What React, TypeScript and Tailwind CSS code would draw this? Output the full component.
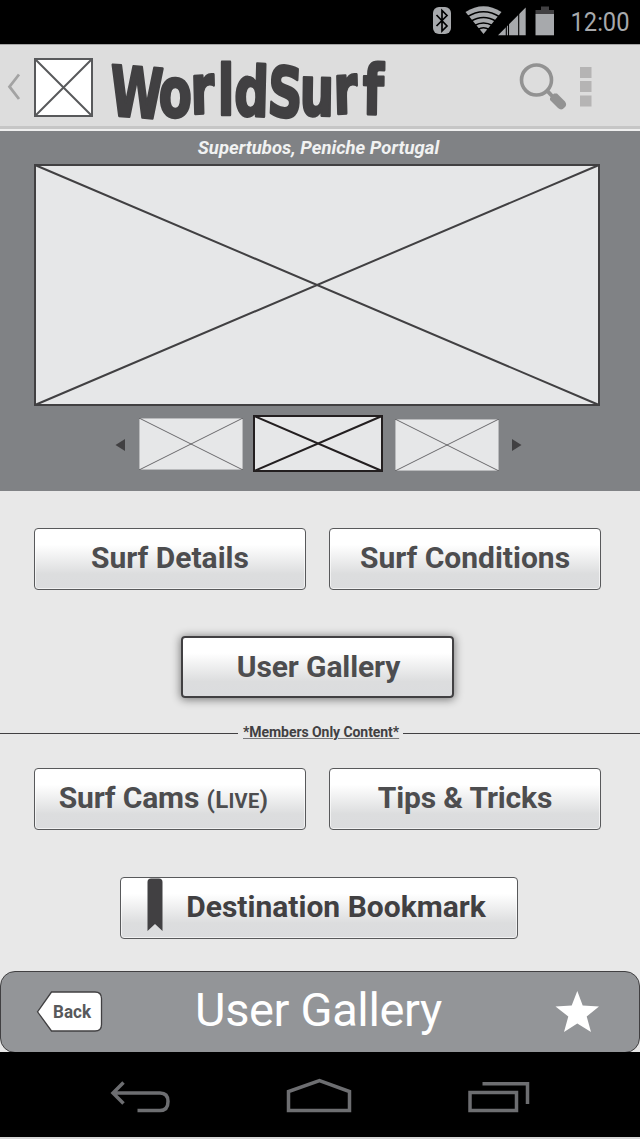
import type { ReactNode } from "react";

function CrossBox({ w, h, stroke, line, fill, className = "" }: { w: number; h: number; stroke: string; line: number; fill: string; className?: string }) {
  const i = line / 2;
  return (
    <svg width={w} height={h} viewBox={`0 0 ${w} ${h}`} className={`block shrink-0 ${className}`}>
      <rect x={i} y={i} width={w - line} height={h - line} fill={fill} stroke={stroke} strokeWidth={line} />
      <path d={`M${i} ${i}L${w - i} ${h - i}M${w - i} ${i}L${i} ${h - i}`} stroke={stroke} strokeWidth={line} />
    </svg>
  );
}

function Thumb({ className = "" }: { className?: string }) {
  return (
    <svg width="104" height="52" viewBox="0 0 104 52" className={`block shrink-0 ${className}`}>
      <rect width="104" height="52" fill="#e6e7e8" stroke="#77797c" strokeWidth="0.8" />
      <path d="M0 0L104 52M104 0L0 52" stroke="#4a4a4c" strokeWidth="0.8" />
    </svg>
  );
}

function Button({ children, glow, className = "" }: { children: ReactNode; glow?: boolean; className?: string }) {
  const frame = glow
    ? "border-2 border-[#414042] shadow-[0_1px_9px_1px_rgba(0,0,0,0.45)]"
    : "border border-[#58595b] shadow-[inset_0_0_0_1px_rgba(255,255,255,0.6)]";
  return (
    <button
      className={`flex h-[62px] shrink-0 items-center justify-center rounded-[4px] bg-[linear-gradient(180deg,#fff_0%,#fff_26%,#dcddde_75%,#dbdcde_100%)] pb-[3px] text-[30px] leading-none font-bold whitespace-nowrap text-[#4d4d4f] ${frame} ${className}`}
    >
      {children}
    </button>
  );
}

function StatusBar() {
  return (
    <div className="flex h-[44px] items-start bg-black pl-[433px]">
      <svg width="205" height="44" viewBox="433 0 205 44">
        <rect x="433" y="7" width="18" height="27" rx="6" fill="#a7a9ac" />
        <path d="M436.500 15L447 26L442 31V10.500L447 15.500L436.500 26" fill="none" stroke="#000" strokeWidth="1.700" />
        <path d="M465.500 12Q483.500 0.500 501.500 12L483.500 34Z" fill="#a7a9ac" />
        <path d="M467 17Q483.500 6.500 500 17M470.500 21.500Q483.500 13.500 496.500 21.500M474.500 25.500Q483.500 20.500 492.500 25.500M478 29.500Q483.500 26 489 29.500" fill="none" stroke="#000" strokeWidth="1.500" />
        <path d="M498 35.300L525.700 7.500V35.300Z" fill="#a7a9ac" />
        <path d="M506.300 20V36M508.500 18V36M518.700 9V36" stroke="#000" strokeWidth="1.100" />
        <path d="M541 10V6.500H549V10H554V14H535.500V10Z" fill="#414042" />
        <path d="M535.500 14H554V35.300H535.500Z" fill="#a7a9ac" />
        <text x="570.500" y="31" fontFamily="Roboto" fontSize="26" fill="#a7a9ac" textLength="59" lengthAdjust="spacingAndGlyphs">12:00</text>
      </svg>
    </div>
  );
}

function Header() {
  return (
    <header className="flex h-[87px] items-start border-t border-[#a5a5a5] bg-[linear-gradient(180deg,#ddd_0,#ddd_81px,#c6c6c6_81px,#c6c6c6_84px,#efefef_84px)]">
      <svg width="28" height="82" viewBox="0 45 28 82" className="ml-0.5 shrink-0">
        <path d="M17 74.500L7.500 86.700L17 99" fill="none" stroke="#a3a3a3" strokeWidth="2.800" />
      </svg>
      <CrossBox w={59} h={59} stroke="#58595b" line={2} fill="#fff" className="mt-[13px] ml-[4px]" />
      <svg width="300" height="82" viewBox="105 45 300 82" className="ml-[12px] shrink-0 overflow-visible">
        <g transform="scale(.7 1)" fontFamily="DejaVu Sans" fontWeight="700" fontSize="69" fill="#414042" stroke="#414042" strokeWidth="2.800" strokeLinejoin="round">
          <text x="156 226 273 311 334 381 428 477 518" y="115 116 114 115 115 115 115 114 114" rotate="3 2 -2 0 2 4 1 -2 1">WorldSurf</text>
        </g>
      </svg>
      <svg width="80" height="82" viewBox="517 45 80 82" className="ml-[112px] shrink-0">
        <circle cx="536.500" cy="80" r="15" fill="none" stroke="#929292" strokeWidth="3.600" />
        <path d="M546.500 90L553 97" stroke="#929292" strokeWidth="4" />
        <path d="M550 98L554 93.500L557 93.500L565 101.500Q567.500 105 564.500 107.500Q561.500 111 558 108L550 100Z" fill="#929292" />
        <path d="M580 67H591.500V78H580ZM580 81H591.500V92H580ZM580 95.500H591.500V106.500H580Z" fill="#b5b4b4" />
      </svg>
    </header>
  );
}

function Arrow({ flip }: { flip?: boolean }) {
  return (
    <svg width="10" height="12" viewBox="0 0 10 12" className="mt-[24px] shrink-0">
      <path d={flip ? "M0 0L9.500 6L0 12Z" : "M10 0L0.500 6L10 12Z"} fill="#414042" />
    </svg>
  );
}

function Carousel() {
  return (
    <section className="flex h-[360px] flex-col bg-[#808285]">
      <div className="flex h-[33px] justify-center pt-[6px] pr-[3px] text-[18.5px] leading-[22px] font-bold text-[#f1f2f2] italic">
        <span>Supertubos, Peniche Portugal</span>
      </div>
      <CrossBox w={566} h={242} stroke="#414042" line={2} fill="#e6e7e8" className="ml-[34px]" />
      <div className="mt-[9px] flex items-start pl-[115px]">
        <Arrow />
        <Thumb className="mt-[3px] ml-[14px]" />
        <CrossBox w={130} h={57} stroke="#231f20" line={2} fill="#e6e7e8" className="ml-[10px]" />
        <Thumb className="mt-[4px] ml-[12px]" />
        <div className="ml-[13px] flex">
          <Arrow flip />
        </div>
      </div>
    </section>
  );
}

function FooterBar() {
  return (
    <div className="flex h-[82px] items-center rounded-[15px] border border-[#414042] bg-[#939598] text-white">
      <svg width="68" height="42" viewBox="0 0 68 42" className="ml-[35px] shrink-0">
        <path d="M1.500 20.800L15.500 1H59Q65.500 1 65.500 7.500V33.500Q65.500 40 59 40H15.500Z" fill="#fff" stroke="#414042" strokeWidth="1.300" />
        <text x="17" y="27" fontFamily="Roboto" fontWeight="700" fontSize="18" fill="#58595b" textLength="38" lengthAdjust="spacingAndGlyphs">Back</text>
      </svg>
      <span className="ml-[91px] w-[248px] pb-[6px] text-[47px] leading-none tracking-[-0.35px] whitespace-nowrap">User Gallery</span>
      <svg width="44" height="42" viewBox="555 991 44 42" className="ml-[112px] shrink-0">
        <path d="M577.300 991L582.700 1005.500L599 1006.500L586.700 1016.500L591 1032L577.300 1023.500L564 1032L568.300 1016.500L555.500 1006.500L571.700 1005.500Z" fill="#fff" />
      </svg>
    </div>
  );
}

function NavBar() {
  return (
    <nav className="-mt-px h-[87px] border-b-2 border-[#d8d8d8] bg-black">
      <svg width="640" height="84" viewBox="0 1052 640 84" fill="none" stroke="#6d6e71" strokeWidth="3.500">
        <path d="M113.500 1093H160Q168 1093 168 1101.500Q168 1110.500 160 1110.500H137.500M123.500 1082.500L113 1093L123.500 1103.500" />
        <path d="M288.500 1110.500V1091.500L319.500 1080.500L349.500 1091.500V1110.500Z" />
        <path d="M470 1092.500H516.500V1110.500H470ZM482.500 1083.700H527.500V1104" />
      </svg>
    </nav>
  );
}

export default function App() {
  return (
    <div className="flex h-[1139px] w-[640px] flex-col overflow-hidden bg-[#e8e8e8] font-['Roboto',sans-serif]">
      <StatusBar />
      <Header />
      <Carousel />
      <main className="h-[480px] shrink-0 pt-[37px]">
        <div className="flex gap-[23px] pl-[34px]">
          <Button className="w-[272px]">Surf Details</Button>
          <Button className="w-[272px]">Surf Conditions</Button>
        </div>
        <div className="mt-[46px] flex pl-[181px]">
          <Button glow className="w-[273px]">
            <span className="pt-[3px] pl-[2px] tracking-[-0.1px]">User Gallery</span>
          </Button>
        </div>
        <div className="mt-[25px] flex h-[20px] items-center text-[14px] leading-none font-bold text-[#414042]">
          <div className="h-px w-[238px] bg-[#414042]" />
          <span className="mx-[5px] w-[155px] pb-[2px] text-center tracking-[-0.06px] whitespace-nowrap underline decoration-[#77787b] decoration-1 underline-offset-1">*Members Only Content*</span>
          <div className="h-px flex-1 bg-[#414042]" />
        </div>
        <div className="mt-[25px] flex gap-[23px] pl-[34px]">
          <Button className="w-[272px]">
            <span className="mr-[13px] tracking-[-0.15px]">Surf Cams <span className="text-[24px] tracking-[0.3px]">(L<span className="text-[20px]">IVE</span>)</span></span>
          </Button>
          <Button className="w-[272px]"><span className="tracking-[-0.15px]">Tips &amp; Tricks</span></Button>
        </div>
        <div className="mt-[47px] flex pl-[120px]">
          <Button className="w-[398px] pr-[5px] text-[#414042]">
            <svg width="16" height="54" viewBox="0 0 16 54" className="-mt-[3px] mr-[23px] shrink-0">
              <path d="M0.500 53V4Q0.500 0.500 4 0.500H12Q15.500 0.500 15.500 4V53L8 46Z" fill="#414042" />
            </svg>
            <span>Destination Bookmark</span>
          </Button>
        </div>
      </main>
      <FooterBar />
      <NavBar />
    </div>
  );
}
